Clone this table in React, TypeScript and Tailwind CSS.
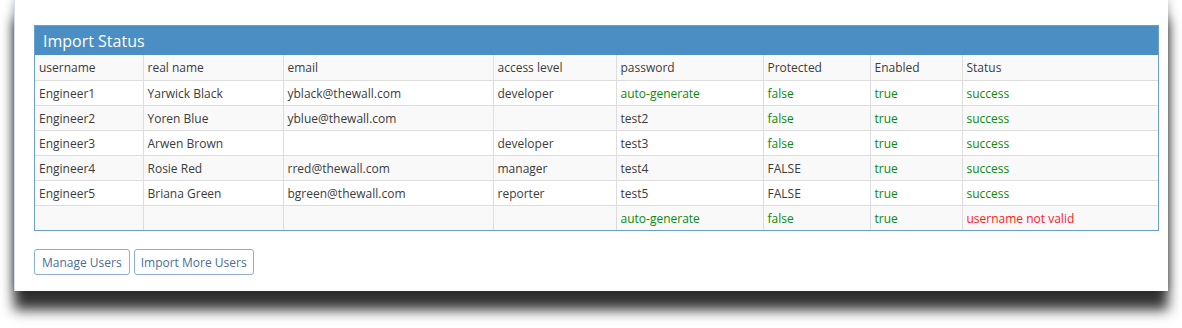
import React from "react";

type Cell = { t: string; c?: "g" | "r" };
const G = (t: string): Cell => ({ t, c: "g" });
const N = (t: string): Cell => ({ t });

const headers = ["username", "real name", "email", "access level", "password", "Protected", "Enabled", "Status"];
const widths = [108, 140, 210, 123, 147, 107, 92, 196];

const rows: Cell[][] = [
  [N("Engineer1"), N("Yarwick Black"), N("yblack@thewall.com"), N("developer"), G("auto-generate"), G("false"), G("true"), G("success")],
  [N("Engineer2"), N("Yoren Blue"), N("yblue@thewall.com"), N(""), N("test2"), G("false"), G("true"), G("success")],
  [N("Engineer3"), N("Arwen Brown"), N(""), N("developer"), N("test3"), G("false"), G("true"), G("success")],
  [N("Engineer4"), N("Rosie Red"), N("rred@thewall.com"), N("manager"), N("test4"), N("FALSE"), G("true"), G("success")],
  [N("Engineer5"), N("Briana Green"), N("bgreen@thewall.com"), N("reporter"), N("test5"), N("FALSE"), G("true"), G("success")],
  [N(""), N(""), N(""), N(""), G("auto-generate"), G("false"), G("true"), { t: "username not valid", c: "r" }],
];

export default function App() {
  return (
    <div className="w-[1182px] h-[328px] bg-white overflow-hidden relative" style={{ fontFamily: '"Open Sans", "Liberation Sans", sans-serif' }}>
      <div className="relative ml-[14px] w-[1154px] h-[291px] bg-white border-l border-[#d6dde4] shadow-[0_19px_12px_0_rgba(0,0,0,0.8),0_0_9px_0_rgba(0,0,0,0.35)] pt-[25px] pl-[19px]">
        <span className="absolute right-[26px] top-[-15px] text-[18px] leading-none text-[#333]">×</span>
        <div className="w-[1125px] border border-[#6a9fcf] overflow-hidden">
          <div className="h-[29px] bg-[#4a8ec3] text-white text-[16px] leading-[30px] pl-[8px]">Import Status</div>
          <table className="border-collapse table-fixed w-[1123px] text-[12px] text-[#3c3c3c]">
            <colgroup>
              {widths.map((w, i) => (
                <col key={i} style={{ width: w }} />
              ))}
            </colgroup>
            <thead>
              <tr className="bg-[#f9f9f9]">
                {headers.map((h, i) => (
                  <td key={i} className="h-[25px] border border-[#dddddd] px-[4px] pt-[2px] pb-0 first:border-l-0 last:border-r-0 border-t-0">
                    {h}
                  </td>
                ))}
              </tr>
            </thead>
            <tbody>
              {rows.map((r, ri) => (
                <tr key={ri} className={ri % 2 === 1 ? "bg-[#f9f9f9]" : "bg-white"}>
                  {r.map((c, ci) => (
                    <td
                      key={ci}
                      className={
                        "h-[25px] border border-[#dddddd] px-[4px] pt-[2px] pb-0 first:border-l-0 last:border-r-0 " +
                        (ri === rows.length - 1 ? "border-b-0 " : "") +
                        (c.c === "g" ? "text-[#0c8a0c]" : c.c === "r" ? "text-[#ff1a1a]" : "")
                      }
                    >
                      {c.t}
                    </td>
                  ))}
                </tr>
              ))}
            </tbody>
          </table>
        </div>
        <div className="flex gap-[4px] mt-[18px]">
          <button className="h-[26px] px-[7px] pt-px border border-[#8db0d2] rounded-[3px] bg-white text-[12px] text-[#4a6f96]">Manage Users</button>
          <button className="h-[26px] px-[6px] pt-px border border-[#8db0d2] rounded-[3px] bg-white text-[12px] text-[#4a6f96]">Import More Users</button>
        </div>
      </div>
    </div>
  );
}
